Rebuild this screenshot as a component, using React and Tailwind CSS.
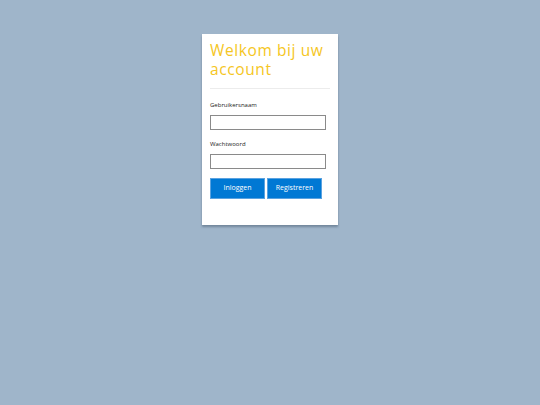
import React from "react";

const Field = ({ label, type = "text" }) => (
  <div className="flex flex-col">
    <label className="text-[6px] leading-[10px] text-[#1a1a1a]">{label}</label>
    <input
      type={type}
      className="mt-[5px] h-[15px] w-[116px] border border-[#8a8a8a] bg-white outline-none"
    />
  </div>
);

const App = () => {
  return (
    <div
      className="flex min-h-[405px] w-full justify-center bg-[#9fb5ca] pt-[34px]"
      style={{ fontFamily: '"Open Sans", "Noto Sans", sans-serif' }}
    >
      <div className="h-[191px] w-[136px] bg-white px-[8px] pt-[7px] shadow-[0_2px_2px_rgba(60,80,100,0.45)]">
        <h1 className="text-[15.5px] leading-[19px] font-normal tracking-[0.6px] text-[#f5c623]">
          Welkom bij uw account
        </h1>
        <hr className="mt-[9px] border-t border-[#ececec]" />
        <div className="mt-[11px] flex flex-col gap-[9px]">
          <Field label="Gebruikersnaam" />
          <Field label="Wachtwoord" type="password" />
        </div>
        <div className="mt-[9px] flex gap-[2px]">
          <button className="h-[21px] w-[55px] border border-[#5aa2e0] bg-[#0078d4] text-[7px] text-white">
            Inloggen
          </button>
          <button className="h-[21px] w-[55px] border border-[#5aa2e0] bg-[#0078d4] text-[7px] text-white">
            Registreren
          </button>
        </div>
      </div>
    </div>
  );
};

export default App;
